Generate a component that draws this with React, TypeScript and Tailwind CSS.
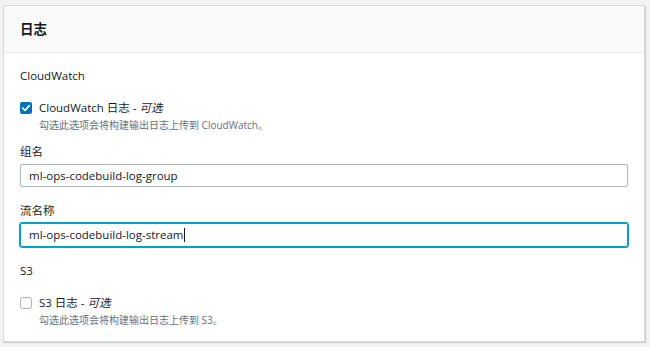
import React from "react";

const font = { fontFamily: '"Open Sans", "Noto Sans CJK SC", sans-serif' };

function Check({ checked }: { checked: boolean }) {
  return checked ? (
    <div className="mt-[3px] flex h-[12px] w-[12px] shrink-0 items-center justify-center rounded-[2px] bg-[#0073bb]">
      <svg width="10" height="10" viewBox="0 0 10 10">
        <path d="M1.8 5.2 L4.1 7.4 L8.3 2.6" fill="none" stroke="#fff" strokeWidth="1.7" strokeLinecap="round" strokeLinejoin="round" />
      </svg>
    </div>
  ) : (
    <div className="mt-[3px] h-[12px] w-[12px] shrink-0 rounded-[3px] border border-[#aab7b8] bg-white" />
  );
}

export default function App() {
  return (
    <div className="h-[347px] w-[650px] overflow-hidden bg-[#f2f3f3] pl-[3px] pr-[5px] pt-[5px] text-[#16191f]" style={font}>
      <div className="border border-[#d5dbdb] bg-white shadow-[1px_1px_1px_rgba(0,28,36,0.15)]">
        <div className="flex h-[47px] items-center border-b border-[#eaeded] bg-[#fafafa] px-[16px]">
          <span className="text-[13.5px] font-bold leading-[20px]">日志</span>
        </div>
        <div className="px-[16px] pb-[13px] pt-[14px]">
          <div className="text-[11.5px] leading-[18px]">CloudWatch</div>
          <div className="mt-[14px] flex gap-[7px]">
            <Check checked />
            <div>
              <div className="text-[11.5px] leading-[18px]">
                CloudWatch 日志 - <i>可选</i>
              </div>
              <div className="text-[10px] leading-[16px] text-[#687078]">勾选此选项会将构建输出日志上传到 CloudWatch。</div>
            </div>
          </div>
          <div className="mt-[10px] text-[11.5px] leading-[18px]">组名</div>
          <div className="mt-[3px] flex h-[23px] w-[608px] items-center rounded-[2px] border border-[#aab7b8] px-[8px] text-[11.5px]">
            ml-ops-codebuild-log-group
          </div>
          <div className="mt-[15px] text-[11.5px] leading-[18px]">流名称</div>
          <div className="mt-[3px] flex h-[24px] w-[608px] items-center rounded-[2px] border border-[#00a1c9] px-[8px] text-[11.5px] shadow-[0_0_0_1px_#00a1c9]">
            ml-ops-codebuild-log-stream
            <span className="ml-[1px] inline-block h-[14px] w-[1px] bg-[#16191f]" />
          </div>
          <div className="mt-[15px] text-[11.5px] leading-[18px]">S3</div>
          <div className="mt-[14px] flex gap-[7px]">
            <Check checked={false} />
            <div>
              <div className="text-[11.5px] leading-[18px]">
                S3 日志 - <i>可选</i>
              </div>
              <div className="text-[10px] leading-[16px] text-[#687078]">勾选此选项会将构建输出日志上传到 S3。</div>
            </div>
          </div>
        </div>
      </div>
    </div>
  );
}
